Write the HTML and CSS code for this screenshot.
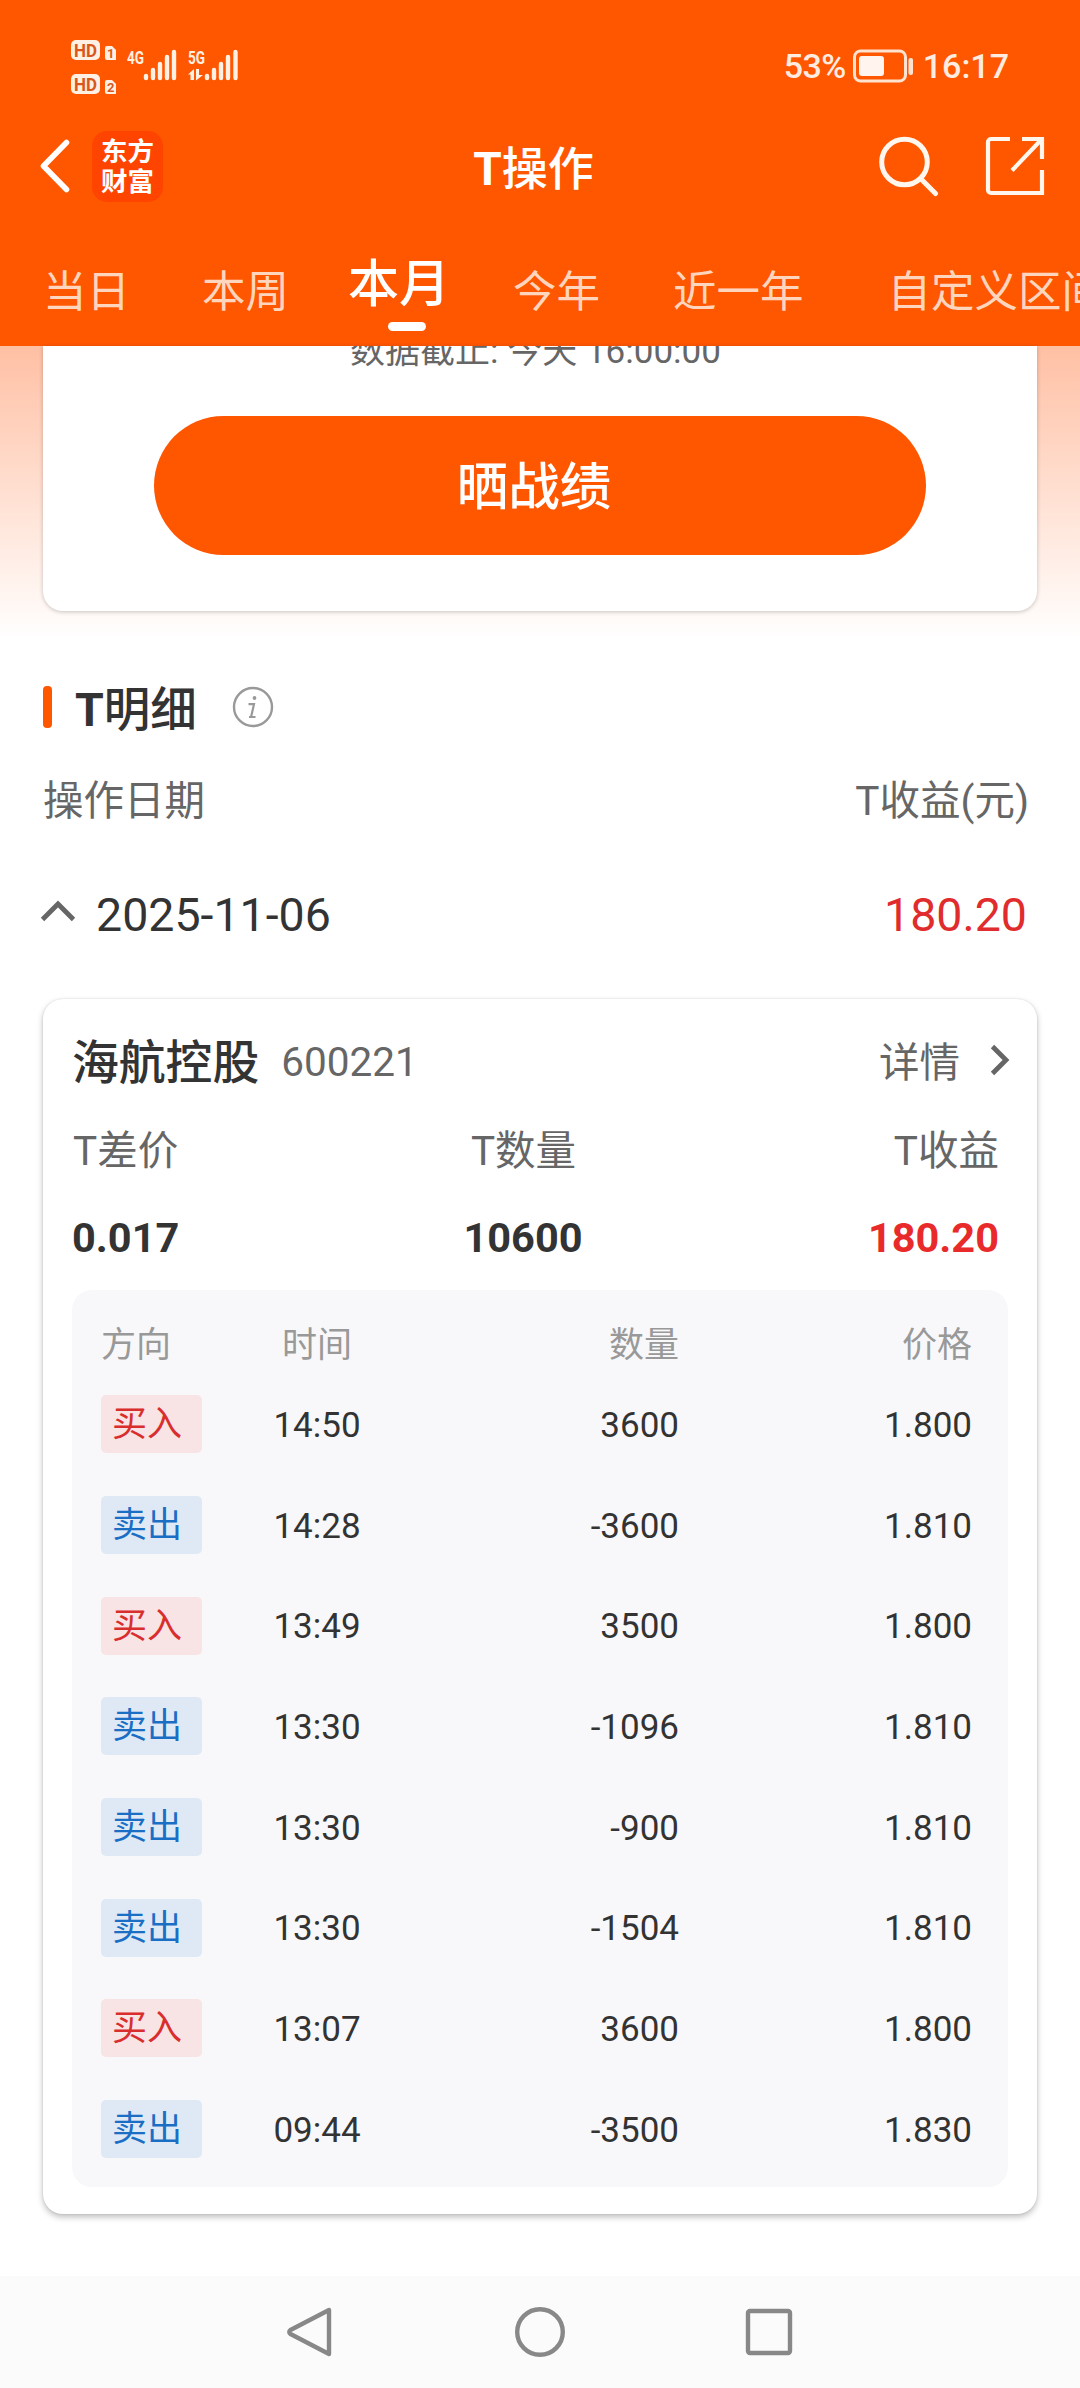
FILE: index.html
```html
<!DOCTYPE html>
<html lang="zh-CN">
<head>
<meta charset="utf-8">
<title>T操作</title>
<link rel="stylesheet" href="styles.css">
</head>
<body>
<div class="screen">
  <header class="header">
    <div class="status">
      <svg class="signals" width="180" height="60" viewBox="0 0 180 60">
        <g fill="#fff0e4">
          <rect x="1" y="5" width="29" height="20" rx="5"/>
          <rect x="1" y="39" width="29" height="20" rx="5"/>
          <path d="M35 13a2 2 0 0 1 2-2h5l4 4v10h-9a2 2 0 0 1-2-2z"/>
          <path d="M35 47a2 2 0 0 1 2-2h5l4 4v10h-9a2 2 0 0 1-2-2z"/>
        </g>
        <g class="badge-text">
          <text x="4" y="21.500" font-size="18" textLength="23" lengthAdjust="spacingAndGlyphs">HD</text>
          <text x="4" y="55.500" font-size="18" textLength="23" lengthAdjust="spacingAndGlyphs">HD</text>
          <text x="37" y="23" font-size="13">1</text>
          <text x="37" y="57" font-size="13">2</text>
        </g>
        <g class="net-text">
          <text x="57" y="28.500" font-size="19" textLength="17" lengthAdjust="spacingAndGlyphs">4G</text>
          <text x="118" y="28.500" font-size="19" textLength="17" lengthAdjust="spacingAndGlyphs">5G</text>
        </g>
        <g stroke="#fff0e4" stroke-width="4.400" stroke-linecap="round">
          <path d="M76 41v2M83 35v8M90 29v14M97 22v21M104 17v26"/>
          <path d="M137 41v2M144 35v8M151 29v14M158 22v21M165.500 17v26"/>
        </g>
        <path d="M118 39.500l6-5.500v11h-3.500v-5.500zM126 34h3v6h4l-7 5.500z" fill="#fff0e4"/>
      </svg>
      <div class="status-right">
        <span class="percent">53%</span>
        <svg class="battery" width="61" height="34" viewBox="0 0 61 34">
          <rect x="1.500" y="2" width="51" height="30" rx="6" fill="none" stroke="#ffe3d0" stroke-width="3"/>
          <rect x="6" y="7" width="25" height="20" rx="3" fill="#fff5ee"/>
          <rect x="55.500" y="9" width="4.500" height="17" rx="2" fill="#ffe3d0"/>
        </svg>
        <span class="clock">16:17</span>
      </div>
    </div>
    <div class="titlebar">
      <div class="title-left">
        <svg width="32" height="56" viewBox="0 0 32 56"><path d="M27.500 4.500L4.500 28l23 23.500" fill="none" stroke="#fff" stroke-width="5.600" stroke-linecap="round" stroke-linejoin="round"/></svg>
        <div class="logo"><span>东方</span><span>财富</span></div>
      </div>
      <h1 class="title"><b>T</b>操作</h1>
      <div class="title-right">
        <svg width="62" height="62" viewBox="0 0 62 62" fill="none" stroke="#fff6ee" stroke-width="5" stroke-linecap="round"><circle cx="26.500" cy="27" r="22.800"/><path d="M43 44l14.500 14.500"/></svg>
        <svg width="60" height="60" viewBox="0 0 60 60" fill="none" stroke="#fff6ee" stroke-width="4.200"><path d="M25 3H6a3 3 0 0 0-3 3v48a3 3 0 0 0 3 3h51V34"/><path d="M37 3h20v20M56 4L27 34.500"/></svg>
      </div>
    </div>
    <nav class="tabs">
      <span class="tab">当日</span>
      <span class="tab tab-week">本周</span>
      <span class="tab tab-active">本月</span>
      <span class="tab tab-year">今年</span>
      <span class="tab tab-last">近一年</span>
      <span class="tab tab-custom">自定义区间</span>
    </nav>
  </header>

  <main class="content">
    <section class="hero">
      <div class="summary">
        <p class="asof">数据截止: 今天 16:00:00</p>
        <button class="share">晒战绩</button>
      </div>
    </section>

    <section class="detail">
      <div class="heading">
        <i class="mark"></i>
        <h2><b>T</b>明细</h2>
        <svg width="42" height="42" viewBox="0 0 42 42"><circle cx="21" cy="21" r="19" fill="none" stroke="#999" stroke-width="2.400"/><circle cx="22.500" cy="12" r="1.900" fill="#999"/><path d="M16.500 18.200h5.500l-2.800 12.300M17 31h6.500" fill="none" stroke="#999" stroke-width="2.200"/></svg>
      </div>
      <div class="labels"><span>操作日期</span><span>T收益(元)</span></div>
      <div class="day">
        <svg width="36" height="24" viewBox="0 0 36 24"><path d="M2.500 20.500L18 5l15.500 15.500" fill="none" stroke="#666" stroke-width="4.800"/></svg>
        <span class="date">2025-11-06</span>
        <span class="gain">180.20</span>
      </div>

      <article class="card">
        <div class="stock">
          <span class="name">海航控股</span>
          <span class="code">600221</span>
          <span class="more">详情</span>
          <svg width="20" height="32" viewBox="0 0 20 32"><path d="M2.500 2.500L16 16 2.500 29.500" fill="none" stroke="#666" stroke-width="4.800"/></svg>
        </div>
        <div class="stats stats-labels"><span>T差价</span><span>T数量</span><span>T收益</span></div>
        <div class="stats stats-values"><span>0.017</span><span>10600</span><span class="red">180.20</span></div>
        <div class="trades">
          <div class="trade trade-head"><span>方向</span><span>时间</span><span>数量</span><span>价格</span></div>
          <div class="trade"><b class="tag buy">买入</b><span>14:50</span><span>3600</span><span>1.800</span></div>
          <div class="trade"><b class="tag sell">卖出</b><span>14:28</span><span>-3600</span><span>1.810</span></div>
          <div class="trade"><b class="tag buy">买入</b><span>13:49</span><span>3500</span><span>1.800</span></div>
          <div class="trade"><b class="tag sell">卖出</b><span>13:30</span><span>-1096</span><span>1.810</span></div>
          <div class="trade"><b class="tag sell">卖出</b><span>13:30</span><span>-900</span><span>1.810</span></div>
          <div class="trade"><b class="tag sell">卖出</b><span>13:30</span><span>-1504</span><span>1.810</span></div>
          <div class="trade"><b class="tag buy">买入</b><span>13:07</span><span>3600</span><span>1.800</span></div>
          <div class="trade"><b class="tag sell">卖出</b><span>09:44</span><span>-3500</span><span>1.830</span></div>
        </div>
      </article>
    </section>
  </main>

  <footer class="navbar">
    <svg width="52" height="52" viewBox="0 0 52 52"><path d="M44 4v44L5.500 28q-2.500-2 0-4z" stroke-linejoin="round"/></svg>
    <svg width="52" height="52" viewBox="0 0 52 52"><circle cx="26" cy="26" r="22.800"/></svg>
    <svg width="52" height="52" viewBox="0 0 52 52"><rect x="5" y="5" width="42" height="42" rx="2"/></svg>
  </footer>
</div>
</body>
</html>
```
FILE: styles.css
```css
* { box-sizing: border-box; }
body {
  margin: 0;
  font-family: Roboto, "Noto Sans CJK SC", sans-serif;
  color: #333;
  background: #fff;
}
svg { display: block; flex: none; }
span, h1, h2, p { white-space: nowrap; }

.screen {
  display: flex;
  flex-direction: column;
  width: 1080px;
  height: 2388px;
  overflow: hidden;
}

/* Header */
.header {
  flex: none;
  height: 346px;
  background: #ff5600;
  color: #fff;
  overflow: hidden;
}
.status {
  display: flex;
  justify-content: space-between;
  height: 121px;
  padding: 35px 71px 0 70px;
}
.badge-text { fill: #d9571b; font-weight: 700; }
.net-text { fill: #fff0e4; font-weight: 700; }
.status-right {
  display: flex;
  align-items: center;
  height: 62px;
  font-size: 34px;
  font-weight: 500;
  line-height: 40px;
  color: #ffece0;
}
.percent { letter-spacing: -0.6px; margin-right: 7px; }
.battery { margin-right: 9px; }

.titlebar {
  display: grid;
  grid-template-columns: 1fr auto 1fr;
  align-items: center;
  height: 90px;
  padding: 0 35px 0 39px;
}
.title-left, .title-right { display: flex; align-items: center; }
.title-left { gap: 21px; }
.logo {
  display: flex;
  flex-direction: column;
  align-items: center;
  justify-content: center;
  width: 71px;
  height: 71px;
  padding-bottom: 3px;
  border-radius: 15px;
  background: #ff4400;
  font-family: "Noto Sans CJK SC", sans-serif;
  font-size: 26.5px;
  font-weight: 700;
  line-height: 30px;
}
.title {
  margin: 0;
  padding: 5px 17px 0 0;
  font-size: 46px;
  font-weight: 500;
  line-height: 60px;
}
.title b, .heading b { font-weight: 700; }
.title-right { justify-content: flex-end; gap: 45px; }

.tabs {
  display: flex;
  height: 135px;
  padding: 49px 0 0 43px;
}
.tab {
  flex: none;
  font-size: 43.5px;
  line-height: 66px;
  color: #ffd5bd;
}
.tab-week { margin-left: 72px; }
.tab-active {
  display: flex;
  flex-direction: column;
  align-items: center;
  margin: -8px 0 0 59px;
  font-size: 51px;
  font-weight: 500;
  color: #fff;
}
.tab-active::after {
  content: "";
  width: 38px;
  height: 9px;
  margin: 4px 0 0 16px;
  border-radius: 5px;
  background: #fff;
}
.tab-year { margin-left: 63px; }
.tab-last { margin-left: 73px; }
.tab-custom { margin-left: 84px; }

/* Summary */
.content { flex: 1; }
.hero {
  height: 294px;
  padding: 0 43px;
  background: linear-gradient(#ffc0a4, #fff);
}
.summary {
  display: flex;
  flex-direction: column;
  align-items: center;
  height: 265px;
  border-radius: 0 0 20px 20px;
  background: #fff;
  box-shadow: 0 1px 4px rgba(0, 0, 0, .22);
  overflow: hidden;
}
.asof {
  margin: -18px 9px 0 0;
  font-size: 35px;
  line-height: 48px;
  color: #666;
}
.share {
  width: 772px;
  height: 139px;
  margin-top: 40px;
  padding: 5px 12px 0 0;
  border: 0;
  border-radius: 70px;
  background: #ff5600;
  color: #fff;
  font: 500 51.5px/60px Roboto, "Noto Sans CJK SC", sans-serif;
}

/* Details */
.detail { padding: 46px 43px 0; }
.heading { display: flex; align-items: center; height: 42px; }
.mark { width: 9px; height: 42px; border-radius: 4px; background: #ff5600; }
.heading h2 { margin: 5px 35px 0 23px; font-size: 46.5px; font-weight: 500; line-height: 42px; }
.labels {
  display: flex;
  justify-content: space-between;
  margin-top: 43px;
  padding-right: 8px;
  font-size: 40.5px;
  line-height: 60px;
  color: #666;
}
.day {
  display: flex;
  align-items: center;
  height: 60px;
  margin: 54px 10px 0 -3px;
  font-size: 46.5px;
  line-height: 60px;
}
.day svg { margin-top: -8px; }
.date { margin-left: 20px; }
.gain { margin-left: auto; color: #e02c2c; }

.card {
  height: 1215px;
  margin-top: 54px;
  padding: 30px 29px 0;
  border-radius: 20px;
  background: #fff;
  box-shadow: 0 3px 6px rgba(0, 0, 0, .26), 0 0 2px rgba(0, 0, 0, .12);
}
.stock { display: flex; align-items: center; height: 66px; color: #666; font-size: 40.5px; }
.name { margin-top: -7px; font-size: 46.800px; font-weight: 500; color: #333; }
.code { margin-left: 22px; }
.more { margin: -6px 30px 0 auto; }
.stock svg { margin: -4px -2px 0 0; }
.stats {
  display: grid;
  grid-template-columns: 300px 1fr 300px;
  padding: 0 9px 0 1px;
  font-size: 40.5px;
  line-height: 60px;
}
.stats span:nth-child(2) { padding-right: 25px; text-align: center; }
.stats span:nth-child(3) { text-align: right; }
.stats-labels { margin-top: 26px; color: #666; }
.stats-values { margin-top: 27px; padding-left: 0; font-size: 41.5px; font-weight: 700; }
.red { color: #e92a2a; }

.trades {
  height: 897px;
  margin-top: 22px;
  padding-top: 22px;
  border-radius: 20px;
  background: #f8f8fa;
}
.trade {
  display: grid;
  grid-template-columns: 101px 230px 247px 293px;
  align-items: center;
  height: 100.7px;
  padding: 0 36px 0 29px;
  font-size: 35px;
}
.trade span { padding-top: 2px; }
.trade-head { height: 58px; margin-bottom: 4px; color: #999; }
.trade-head span { padding-top: 0; }
.trade span:nth-child(2) { text-align: center; }
.trade span:nth-child(n+3) { text-align: right; }
.tag {
  height: 58px;
  padding-left: 11px;
  border-radius: 5px;
  font-weight: 400;
  line-height: 59px;
}
.buy { background: #f8e3e5; color: #d92e2e; }
.sell { background: #dfe9f6; color: #1a6fc4; }

/* System navigation */
.navbar {
  display: flex;
  flex: none;
  justify-content: center;
  gap: 177px;
  height: 112px;
  padding-top: 30px;
  background: #fbfbfb;
}
.navbar svg { fill: none; stroke: #888; stroke-width: 4.400; }
```
